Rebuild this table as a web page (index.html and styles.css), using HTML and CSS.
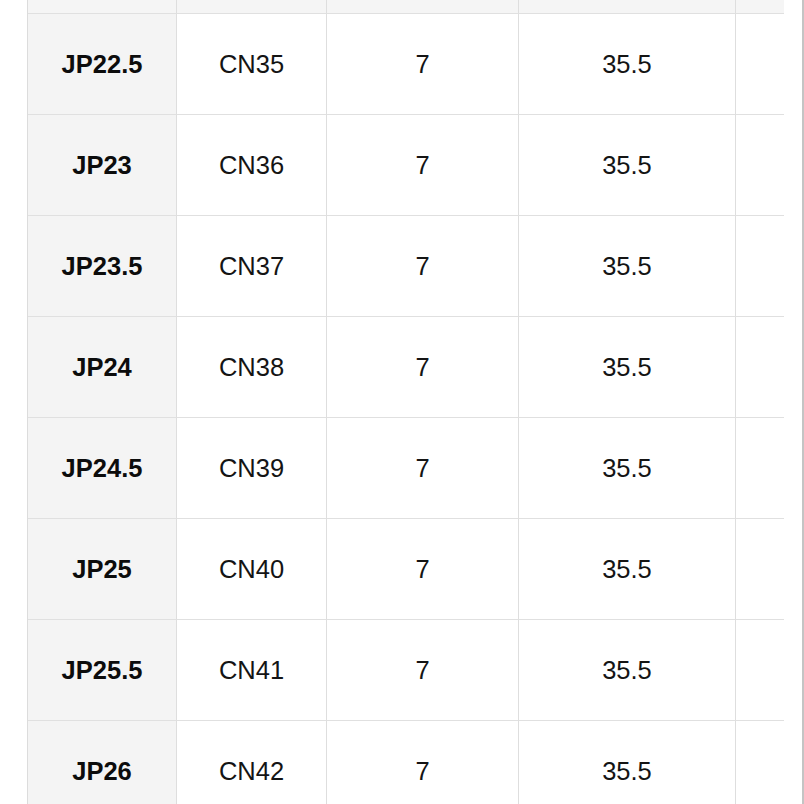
FILE: index.html
```html
<!DOCTYPE html>
<html lang="en">
<head>
<meta charset="utf-8">
<title>Size chart</title>
<link rel="stylesheet" href="styles.css">
</head>
<body>
<div class="page">
  <div class="chart">
    <div class="cell head key"></div><div class="cell head"></div><div class="cell head"></div><div class="cell head"></div><div class="cell head last"></div>

    <div class="cell key">JP22.5</div><div class="cell">CN35</div><div class="cell">7</div><div class="cell">35.5</div><div class="cell last"></div>
    <div class="cell key">JP23</div><div class="cell">CN36</div><div class="cell">7</div><div class="cell">35.5</div><div class="cell last"></div>
    <div class="cell key">JP23.5</div><div class="cell">CN37</div><div class="cell">7</div><div class="cell">35.5</div><div class="cell last"></div>
    <div class="cell key">JP24</div><div class="cell">CN38</div><div class="cell">7</div><div class="cell">35.5</div><div class="cell last"></div>
    <div class="cell key">JP24.5</div><div class="cell">CN39</div><div class="cell">7</div><div class="cell">35.5</div><div class="cell last"></div>
    <div class="cell key">JP25</div><div class="cell">CN40</div><div class="cell">7</div><div class="cell">35.5</div><div class="cell last"></div>
    <div class="cell key">JP25.5</div><div class="cell">CN41</div><div class="cell">7</div><div class="cell">35.5</div><div class="cell last"></div>
    <div class="cell key">JP26</div><div class="cell">CN42</div><div class="cell">7</div><div class="cell">35.5</div><div class="cell last"></div>
  </div>
  <div class="edge"></div>
</div>
</body>
</html>
```

FILE: styles.css
```css
* {
  box-sizing: border-box;
}

html, body {
  margin: 0;
  padding: 0;
  background: #ffffff;
}

body {
  width: 804px;
  height: 804px;
  overflow: hidden;
  font-family: "Liberation Sans", Arial, Helvetica, sans-serif;
  color: #141414;
}

.page {
  display: flex;
  height: 804px;
  padding-left: 27px;
  background: #ffffff;
}

.chart {
  display: grid;
  grid-template-columns: 149px 150px 192px 217px 48px;
  grid-template-rows: 14px;
  grid-auto-rows: 101px;
  border-left: 1px solid #dcdcdc;
  align-self: flex-start;
}

.cell {
  display: flex;
  align-items: center;
  justify-content: center;
  border-right: 1px solid #dedede;
  border-bottom: 1.5px solid #e0e0e0;
  font-size: 25.5px;
  background: #ffffff;
}

.cell.key {
  background: #f4f4f4;
  font-weight: bold;
  color: #0c0c0c;
}

.cell.head {
  background: #f5f5f5;
}

.cell.last {
  border-right: none;
}

.edge {
  margin-left: auto;
  margin-right: 0;
  width: 2px;
  height: 804px;
  background: #c4c4c4;
}
```
